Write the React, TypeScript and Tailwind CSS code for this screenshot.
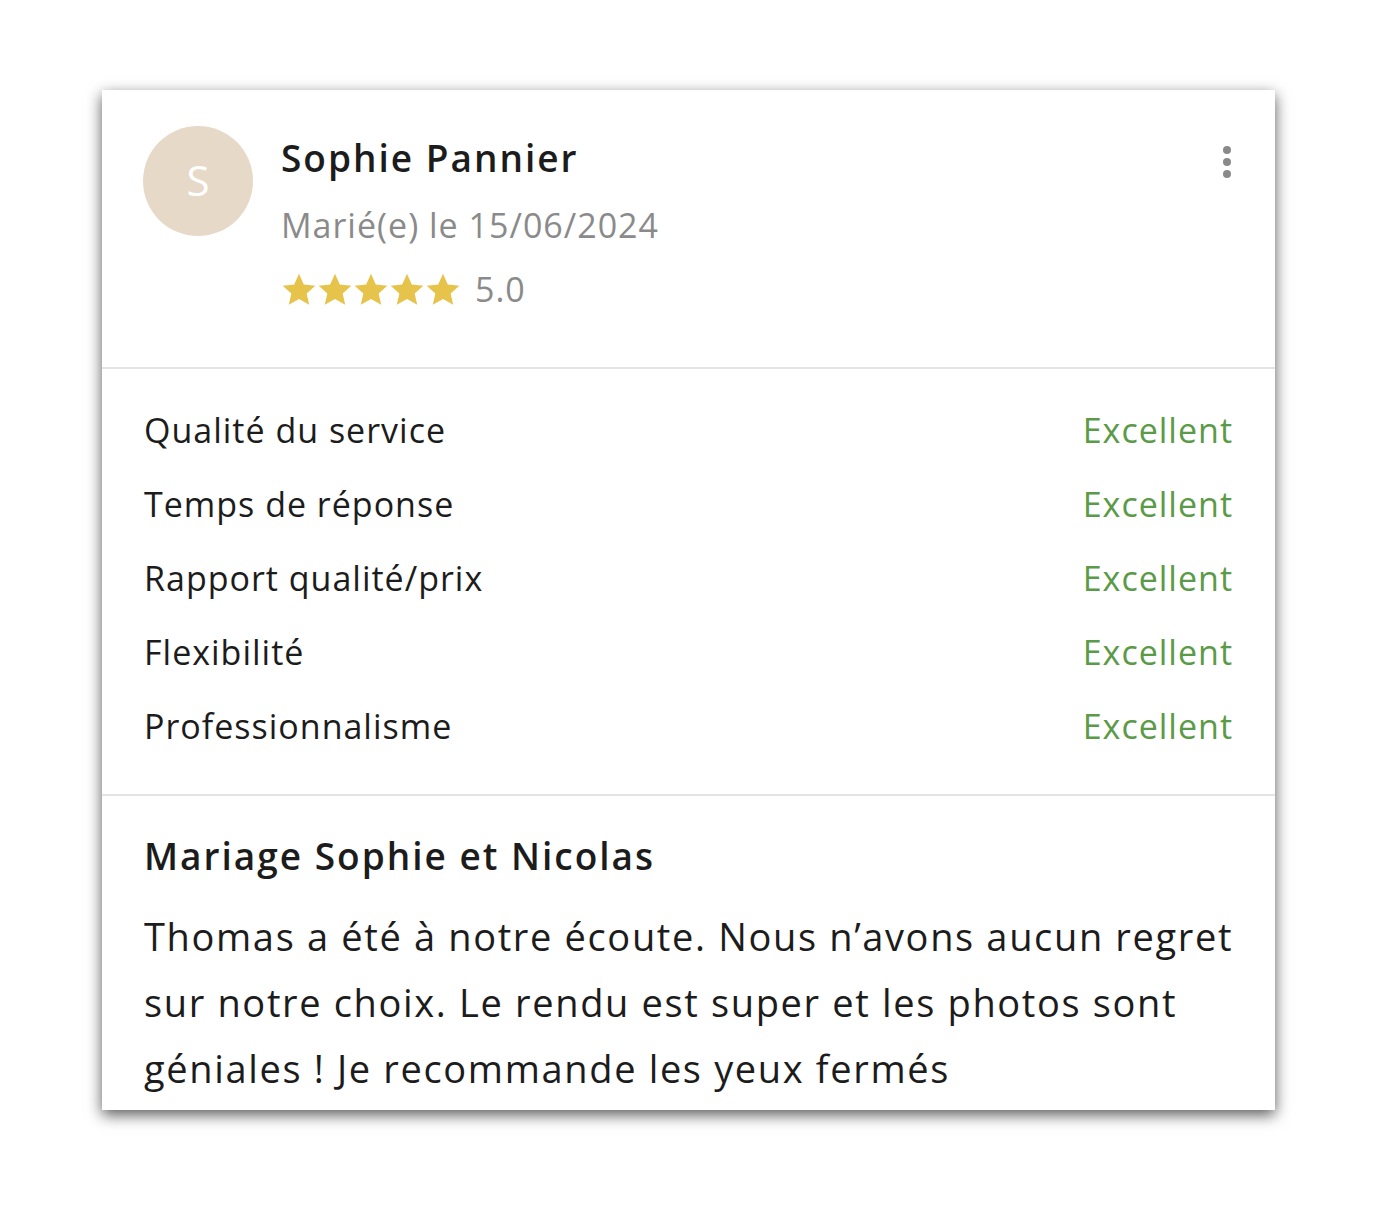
const criteria = [
  "Qualité du service",
  "Temps de réponse",
  "Rapport qualité/prix",
  "Flexibilité",
  "Professionnalisme",
];

function Star() {
  return (
    <svg viewBox="0 0 24 24" className="w-[36px] h-[36px]" fill="#e6c34a">
      <path d="M12 1.2l3.2 7.1 7.7.8-5.8 5.2 1.7 7.6L12 18 5.2 21.9l1.7-7.6L1.1 9.1l7.7-.8z" />
    </svg>
  );
}

export default function App() {
  return (
    <div
      className="min-h-screen bg-white pt-[90px] pl-[102px]"
      style={{ fontFamily: "'Open Sans', sans-serif" }}
    >
      <div className="w-[1173px] h-[1020px] bg-white shadow-[0_5px_14px_rgba(0,0,0,0.65)] overflow-hidden">
        {/* Header */}
        <div className="flex px-[41px] pt-[36px] pb-[52px] border-b-2 border-[#e4e4e4]">
          <div className="w-[110px] h-[110px] rounded-full bg-[#e7d9c7] flex items-center justify-center pb-[4px] text-white text-[42px] shrink-0">
            S
          </div>
          <div className="flex-1 ml-[28px]">
            <div className="text-[37px] font-semibold tracking-[2px] text-[#1c1c1c] leading-[64px]">Sophie Pannier</div>
            <div className="text-[34px] tracking-[1px] text-[#8a8a8a] leading-[70px]">Marié(e) le 15/06/2024</div>
            <div className="flex items-center mt-[4px]">
              <div className="flex">
                <Star />
                <Star />
                <Star />
                <Star />
                <Star />
              </div>
              <span className="ml-[14px] text-[34px] tracking-[1px] text-[#8a8a8a]">5.0</span>
            </div>
          </div>
          <svg viewBox="0 0 10 32" className="w-[10px] h-[32px] mt-[20px] mr-[2px]" fill="#8a8a8a">
            <circle cx="5" cy="4" r="4" />
            <circle cx="5" cy="16" r="4" />
            <circle cx="5" cy="28" r="4" />
          </svg>
        </div>

        {/* Criteria */}
        <div className="px-[42px] pt-[24px] pb-[31px] border-b-2 border-[#e4e4e4]">
          {criteria.map((c) => (
            <div key={c} className="flex justify-between items-center h-[74px] text-[34px] tracking-[1px]">
              <span className="text-[#1c1c1c]">{c}</span>
              <span className="text-[#5b9a47]">Excellent</span>
            </div>
          ))}
        </div>

        {/* Review */}
        <div className="pl-[42px] pt-[28px]">
          <div className="text-[37px] font-semibold tracking-[2px] text-[#1c1c1c] leading-[64px]">
            Mariage Sophie et Nicolas
          </div>
          <p className="text-[38px] tracking-[1.65px] text-[#1c1c1c] leading-[66px] mt-[15px] whitespace-nowrap">
            Thomas a été à notre écoute. Nous n’avons aucun regret
            <br />
            sur notre choix. Le rendu est super et les photos sont
            <br />
            géniales ! Je recommande les yeux fermés
          </p>
        </div>
      </div>
    </div>
  );
}
